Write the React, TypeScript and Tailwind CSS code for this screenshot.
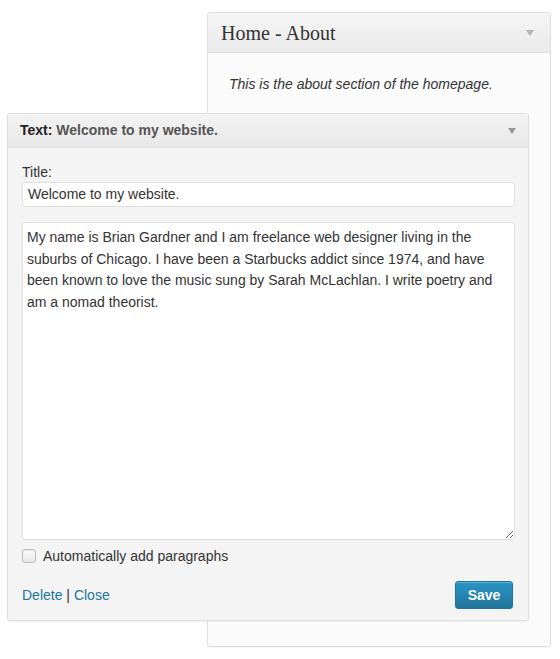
import React from "react";

const Arrow = ({ color }: { color: string }) => (
  <svg width="8" height="6" viewBox="0 0 8 6">
    <path d="M0 0 L8 0 L4 6 Z" fill={color} />
  </svg>
);

export default function App() {
  return (
    <div className="relative h-[659px] w-[560px] overflow-hidden bg-white pt-[12px] font-['Liberation_Sans',Arial,sans-serif]">
      {/* widget in the sidebar */}
      <div className="ml-[207px] h-[635px] w-[344px] rounded-[3px] border border-[#dfdfdf] bg-[#fbfbfb] shadow-[0_1px_1px_rgba(0,0,0,0.04)]">
        <div className="flex h-[40px] items-center justify-between border-b border-[#dfdfdf] bg-gradient-to-b from-[#f5f5f5] to-[#eaeaea] pl-[13px] pr-[16px]">
          <span className="font-['Liberation_Serif',Georgia,serif] text-[20px] leading-[24px] text-[#333]">Home - About</span>
          <Arrow color="#b4b4b4" />
        </div>
        <p className="pl-[21px] pt-[22px] text-[14px] leading-[18px] text-[#333] italic">
          This is the about section of the homepage.
        </p>
      </div>

      {/* open widget form */}
      <div className="absolute left-[7px] top-[113px] h-[508px] w-[522px] rounded-[3px] border border-[#dfdfdf] bg-[#f4f4f4] shadow-[0_1px_2px_rgba(0,0,0,0.06)]">
        <div className="flex h-[34px] items-center justify-between border-b border-[#dfdfdf] bg-gradient-to-b from-[#f3f3f3] to-[#e8e8e8] pl-[12px] pr-[12px]">
          <span className="text-[14px] font-bold text-[#555]">
            <span className="text-[#222]">Text:</span> Welcome to my website.
          </span>
          <Arrow color="#999" />
        </div>
        <div className="px-[14px] pt-[16px]">
          <label className="block text-[14px] leading-[17px] text-[#333]">Title:</label>
          <div className="mt-[1px] flex h-[25px] w-[493px] items-center rounded-[3px] border border-[#dfdfdf] bg-white px-[5px] text-[14px] text-[#333]">
            Welcome to my website.
          </div>
          <textarea
            readOnly
            className="mt-[15px] block h-[318px] w-[493px] resize-y rounded-[3px] border border-[#dfdfdf] bg-white px-[4px] pt-[4px] text-[14px] leading-[21.5px] text-[#333] outline-none"
            defaultValue="My name is Brian Gardner and I am freelance web designer living in the suburbs of Chicago. I have been a Starbucks addict since 1974, and have been known to love the music sung by Sarah McLachlan. I write poetry and am a nomad theorist."
          />
          <div className="mt-[7px] flex h-[18px] items-center gap-[7px]">
            <span className="h-[14px] w-[14px] rounded-[3px] border border-[#bbb] bg-gradient-to-b from-[#fdfdfd] to-[#e6e6e6] shadow-[inset_0_1px_1px_rgba(0,0,0,0.08)]" />
            <span className="text-[14px] text-[#333]">Automatically add paragraphs</span>
          </div>
          <div className="mt-[16px] flex w-[493px] items-center justify-between">
            <div className="text-[14px] text-[#333]">
              <a className="text-[#21759b]">Delete</a> | <a className="text-[#21759b]">Close</a>
            </div>
            <button className="mr-[2px] h-[28px] w-[58px] rounded-[3px] border border-[#21759b] bg-gradient-to-b from-[#2a95c5] to-[#21759b] text-[14px] font-bold text-white shadow-[inset_0_1px_0_rgba(120,200,230,0.5)]">
              Save
            </button>
          </div>
        </div>
      </div>
    </div>
  );
}
